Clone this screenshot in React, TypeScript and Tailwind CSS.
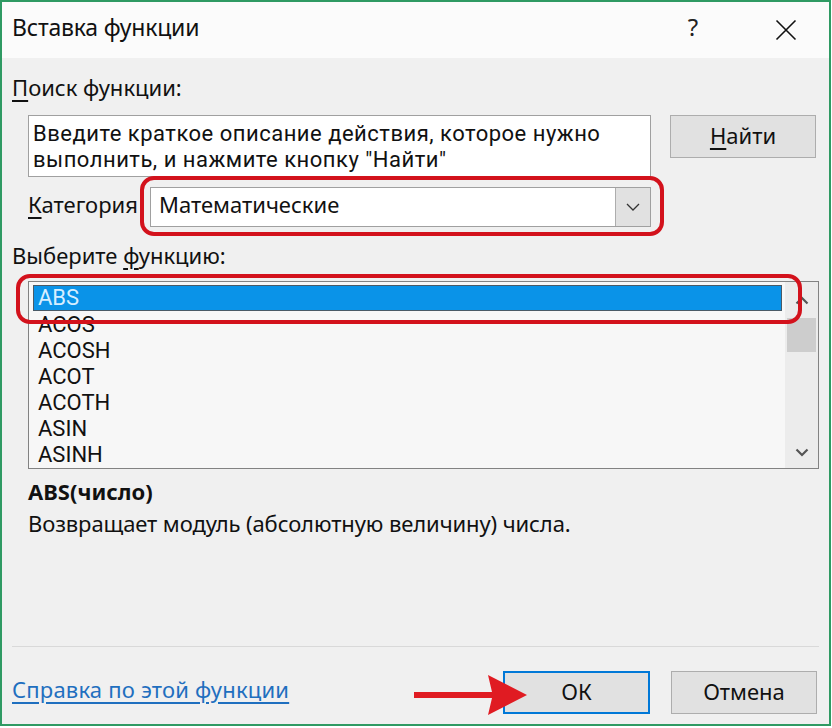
import React from "react";

const font = { fontFamily: '"Noto Sans", "Open Sans", sans-serif' };
const listFont = { fontFamily: 'Roboto, "Noto Sans", sans-serif' };

function Btn({ children, primary, className }: { children: React.ReactNode; primary?: boolean; className?: string }) {
  return (
    <div
      className={
        "flex items-center justify-center pb-[3px] bg-[#e1e1e1] text-[22px] text-[#111] " +
        (primary ? "border-2 border-[#0078d7] " : "border border-[#adadad] ") +
        (className ?? "")
      }
    >
      {children}
    </div>
  );
}

export default function App() {
  const items = ["ACOS", "ACOSH", "ACOT", "ACOTH", "ASIN", "ASINH"];
  return (
    <div className="w-[832px] h-[728px] bg-white" style={font}>
      <div className="relative w-[831px] h-[726px] border-2 border-[#2f9a63] flex flex-col">
        {/* title bar */}
        <div className="h-[56px] bg-[#fbfbfb] flex items-center pl-[10px] pb-[6px] text-[23px] text-[#111]">
          <span className="flex-1 tracking-[-0.2px]">Вставка функции</span>
          <span className="w-[20px] text-center mr-[72px] text-[24px] text-[#222]">?</span>
          <svg width="22" height="22" viewBox="0 0 22 22" className="mr-[32px] mt-[6px]">
            <path d="M1.5 1.5 L20.5 20.5 M20.5 1.5 L1.5 20.5" stroke="#111" strokeWidth="1.6" />
          </svg>
        </div>
        {/* body */}
        <div className="flex-1 bg-[#f0f0f0] flex flex-col text-[#111] text-[22px] leading-none">
          <div className="pl-[10px] mt-[17px] h-[24px] flex items-center">
            <span><span className="underline underline-offset-4">П</span>оиск функции:</span>
          </div>
          <div className="flex mt-[16px] pl-[26px]">
            <div
              className="w-[623px] h-[62px] bg-white border border-[#a0a0a0] px-[4px] pt-[5px] text-[22px] leading-[26px] tracking-[0.5px]"
              style={listFont}
            >
              Введите краткое описание действия, которое нужно<br />выполнить, и нажмите кнопку "Найти"
            </div>
            <Btn className="ml-[19px] w-[146px] h-[43px]">
              <span><span className="underline underline-offset-4">Н</span>айти</span>
            </Btn>
          </div>
          <div className="flex items-center mt-[10px] pl-[26px] h-[40px]">
            <span className="w-[122px] pb-[7px]"><span className="underline underline-offset-4">К</span>атегория</span>
            <div className="w-[501px] h-[40px] bg-white border border-[#a0a0a0] flex">
              <div className="flex-1 flex items-center pl-[8px] pb-[7px]">Математические</div>
              <div className="w-[35px] bg-[#e1e1e1] border-l border-[#adadad] flex items-center justify-center">
                <svg width="14" height="8" viewBox="0 0 14 8">
                  <path d="M1 1 L7 7 L13 1" fill="none" stroke="#333" strokeWidth="1.3" />
                </svg>
              </div>
            </div>
          </div>
          <div className="pl-[10px] mt-[16px] h-[24px] flex items-center">
            <span>Выберите <span className="underline underline-offset-4">ф</span>ункцию:</span>
          </div>
          <div className="ml-[26px] mt-[14px] w-[791px] h-[188px] bg-[#f7f7f7] border border-[#828282] flex">
            <div className="flex-1 pt-[3px] pl-[4px] text-[22px]" style={listFont}>
              <div className="h-[26px] w-[749px] bg-[#0a93e8] border border-[#4a5a66] flex items-center pl-[4px] text-[#d6eeff]">
                ABS
              </div>
              {items.map((t) => (
                <div key={t} className="h-[26px] flex items-center pl-[5px] pt-[2px]">
                  {t}
                </div>
              ))}
            </div>
            <div className="w-[33px] bg-[#ececec] flex flex-col items-center">
              <svg width="14" height="9" viewBox="0 0 14 9" className="mt-[14px]">
                <path d="M1.5 7.5 L7 2 L12.5 7.5" fill="none" stroke="#555" strokeWidth="2.2" />
              </svg>
              <div className="mt-[13px] w-[29px] h-[34px] bg-[#cdcdcd]" />
              <div className="flex-1" />
              <svg width="14" height="9" viewBox="0 0 14 9" className="mb-[11px]">
                <path d="M1.5 1.5 L7 7 L12.5 1.5" fill="none" stroke="#555" strokeWidth="2.2" />
              </svg>
            </div>
          </div>
          <div className="pl-[26px] mt-[9px] h-[26px] flex items-center font-bold">ABS(число)</div>
          <div className="pl-[26px] mt-[6px] h-[26px] flex items-center tracking-[-0.1px]">
            Возвращает модуль (абсолютную величину) числа.
          </div>
          <div className="flex-1" />
          <div className="mx-[10px] h-px bg-[#d9d9d9]" />
          <div className="flex items-center mt-[24px] mb-[10px] pl-[10px]">
            <span className="flex-1 pb-[8px]">
              <span className="text-[#1f6fbf] underline underline-offset-4 tracking-[0.2px]">Справка по этой функции</span>
            </span>
            <Btn primary className="w-[147px] h-[43px]">ОК</Btn>
            <Btn className="ml-[21px] mr-[12px] w-[146px] h-[43px]">Отмена</Btn>
          </div>
        </div>

        {/* red highlight outlines */}
        <div className="absolute left-[138px] top-[174px] w-[524px] h-[60px] rounded-[14px] border-[4px] border-[#d3121c]" />
        <div className="absolute left-[14px] top-[272px] w-[786px] h-[50px] rounded-[14px] border-[4px] border-[#d3121c]" />
        {/* red arrow */}
        <svg className="absolute left-[410px] top-[670px]" width="120" height="46" viewBox="0 0 120 46">
          <path d="M2 20 L80 20 L76 3 L115 23 L76 43 L80 26 L2 26 Z" fill="#e01b22" />
        </svg>
      </div>
    </div>
  );
}
